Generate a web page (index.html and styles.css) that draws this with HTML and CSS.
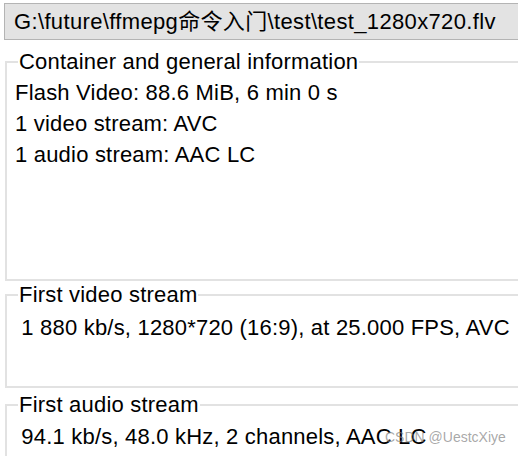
FILE: index.html
```html
<!DOCTYPE html>
<html>
<head>
<meta charset="utf-8">
<link rel="stylesheet" href="styles.css">
</head>
<body>
<div class="page">
  <div class="path">G:\future\ffmepg命令入门\test\test_1280x720.flv</div>
  <fieldset class="group group-general">
    <legend>Container and general information</legend>
    <div class="line">Flash Video: 88.6 MiB, 6 min 0 s</div>
    <div class="line">1 video stream: AVC</div>
    <div class="line">1 audio stream: AAC LC</div>
  </fieldset>
  <fieldset class="group group-video">
    <legend>First video stream</legend>
    <div class="line">&nbsp;1 880 kb/s, 1280*720 (16:9), at 25.000 FPS, AVC</div>
  </fieldset>
  <fieldset class="group group-audio">
    <legend>First audio stream</legend>
    <div class="line">&nbsp;94.1 kb/s, 48.0 kHz, 2 channels, AAC LC</div>
  </fieldset>
  <div class="watermark">CSDN @UestcXiye</div>
</div>
</body>
</html>
```
FILE: styles.css
```css
html, body {
  margin: 0;
  padding: 0;
  background: #ffffff;
  overflow: hidden;
}
.page {
  position: relative;
  width: 518px;
  height: 456px;
  overflow: hidden;
  font-family: "Liberation Sans", Arial, "Noto Sans CJK SC", sans-serif;
  font-size: 22px;
  letter-spacing: 0.2px;
  color: #000;
}
.path {
  margin: 3px 0 0 4px;
  height: 35px;
  line-height: 36px;
  border: 1px solid #b4b4b4;
  border-right: none;
  background: #e3e3e3;
  padding-left: 9px;
  white-space: nowrap;
  letter-spacing: 0.35px;
}
.group {
  margin: 0 0 0 5px;
  width: 540px;
  box-sizing: border-box;
  border: 2px solid #e2e2e2;
  padding: 0 0 0 8px;
  min-width: 0;
}
.group legend {
  padding: 0 1px;
  margin-left: 3px;
  line-height: 22px;
}
.line {
  line-height: 31px;
  white-space: nowrap;
}
.group-general {
  margin-top: 11px;
  height: 230px;
  padding-top: 4px;
}
.group-video {
  margin-top: 3px;
  height: 104px;
  padding-top: 6px;
}
.group-audio {
  margin-top: 6px;
  height: 100px;
  padding-top: 5px;
}
.watermark {
  position: absolute;
  left: 385px;
  top: 428px;
  font-size: 14px;
  letter-spacing: 0;
  line-height: 18px;
  color: rgba(130, 130, 130, 0.7);
  white-space: nowrap;
}
```
